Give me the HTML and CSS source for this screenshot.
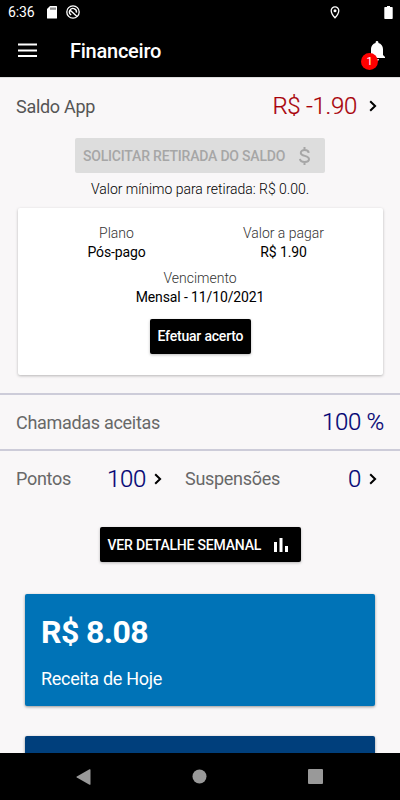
FILE: index.html
```html
<!DOCTYPE html>
<html lang="pt-BR">
<head>
<meta charset="utf-8">
<title>Financeiro</title>
<link rel="stylesheet" href="styles.css">
</head>
<body>
<div class="screen">
  <div class="statusbar">
    <span class="clock">6:36</span>
    <svg class="sd" width="10" height="13" viewBox="0 0 10 13"><path fill="#fff" d="M3 0h6.5q.5 0 .5.5v11.500q0 .5-.5.5h-9q-.5 0-.5-.5V3z"/><path stroke="#000" stroke-width=".9" d="M4 1.500v2.300M6 1.500v2.300M8 1.500v2.300"/></svg>
    <svg class="dnd" width="14" height="14" viewBox="0 0 14 14" fill="none" stroke="#fff"><circle cx="7" cy="7" r="6.200" stroke-width="1.300"/><path stroke-width="1.400" d="M5.200 10A3.500 3.500 0 1 1 10.400 7.600M4.500 5.500l6.500 6"/></svg>
    <svg class="pin" width="10" height="13" viewBox="0 0 10 13"><path fill="none" stroke="#fff" stroke-width="1.300" d="M5 .9A3.700 3.700 0 0 0 1.200 4.700C1.200 7.500 5 11.800 5 11.800S8.800 7.500 8.800 4.700A3.700 3.700 0 0 0 5 .9z"/><circle cx="5" cy="4.700" r="1.500" fill="#fff"/></svg>
    <svg class="battery" width="9" height="13" viewBox="0 0 9 13"><path fill="#fff" d="M3 0h3v1h2q.7 0 .7.700v10.600q0 .7-.7.7H1q-.7 0-.7-.7V1.700Q.3 1 1 1h2z"/></svg>
  </div>
  <header class="appbar">
    <svg width="19" height="15" viewBox="0 0 19 15"><path stroke="#fff" stroke-width="2" d="M0 1.500h19M0 7.500h19M0 13h19"/></svg>
    <h1>Financeiro</h1>
    <div class="bell">
      <svg width="16" height="20" viewBox="0 0 16 20"><path fill="#fff" d="M8 0c.8 0 1.400.6 1.400 1.300v.8C12.200 2.800 14 5.200 14 8v6l2 2v1H0v-1l2-2V8c0-2.800 1.800-5.200 4.600-5.900v-.8C6.600.6 7.200 0 8 0zM6 18h4a2 2 0 0 1-4 0z"/></svg>
      <span class="badge">1</span>
    </div>
  </header>
  <main>
    <section class="balance">
      <div class="row">
        <span class="label dark">Saldo App</span>
        <span class="value red">R$ -1.90</span>
        <svg class="chev" width="8" height="12" viewBox="0 0 8 12"><path d="M1.200 1.200l4.900 4.800-4.900 4.800"/></svg>
      </div>
      <button class="btn disabled" disabled><span>SOLICITAR RETIRADA DO SALDO</span><svg width="11" height="18" viewBox="0 0 11 18" fill="none" stroke="#a6a6a6" stroke-width="2"><path d="M5.500 0v3M5.500 15v3M9.700 5.800C9.500 3.900 7.900 3 5.700 3 3.500 3 1.800 4.100 1.800 5.900c0 4 8.200 2 8.200 6.200 0 2-1.800 2.900-4.300 2.900C3.200 15 1.200 14 1 11.900"/></svg></button>
      <p class="minimum">Valor mínimo para retirada: R$ 0.00.</p>
      <div class="card">
        <div class="plan">
          <div class="type"><p class="key">Plano</p><p class="val">Pós-pago</p></div>
          <div class="amount"><p class="key">Valor a pagar</p><p class="val">R$ 1.90</p></div>
        </div>
        <div class="due"><p class="key">Vencimento</p><p class="val">Mensal - 11/10/2021</p></div>
        <button class="btn settle">Efetuar acerto</button>
      </div>
    </section>
    <section class="row calls">
      <span class="label accepted">Chamadas aceitas</span>
      <span class="value blue">100 %</span>
    </section>
    <section class="stats">
      <div class="row points">
        <span class="label">Pontos</span><span class="value blue">100</span>
        <svg class="chev" width="8" height="12" viewBox="0 0 8 12"><path d="M1.200 1.200l4.900 4.800-4.900 4.800"/></svg>
      </div>
      <div class="row suspensions">
        <span class="label">Suspensões</span><span class="value blue">0</span>
        <svg class="chev" width="8" height="12" viewBox="0 0 8 12"><path d="M1.200 1.200l4.900 4.800-4.900 4.800"/></svg>
      </div>
    </section>
    <button class="btn weekly"><span>VER DETALHE SEMANAL</span><svg width="14" height="14" viewBox="0 0 14 14"><path fill="#fff" d="M0 4h3v10H0zM5.500 0h3v14h-3zM11 8h3v6h-3z"/></svg></button>
    <article class="income"><strong>R$ 8.08</strong><span>Receita de Hoje</span></article>
    <article class="income next"></article>
  </main>
  <nav>
    <svg width="15" height="16" viewBox="0 0 15 16"><path fill="#999" d="M13.500.3q1-.5 1 .7v14q0 1.200-1 .7L.8 8.600q-.8-.6 0-1.200z"/></svg>
    <svg width="15" height="15" viewBox="0 0 15 15"><circle cx="7.500" cy="7.500" r="7" fill="#999"/></svg>
    <svg width="15" height="15" viewBox="0 0 15 15"><rect width="15" height="15" rx="1" fill="#999"/></svg>
  </nav>
</div>
</body>
</html>
```
FILE: styles.css
```css
* { box-sizing: border-box; margin: 0; padding: 0; }
body { font-family: Roboto, sans-serif; background: #f9f7f8; color: #000; }
svg { display: block; flex: none; }
button { font: inherit; border: 0; }
.screen { width: 400px; height: 800px; display: flex; flex-direction: column; overflow: hidden; white-space: nowrap; }
.statusbar { height: 24px; flex: none; background: #000; color: #fff; display: flex; align-items: center; padding: 0 7px 0 8px; }
.clock { font-size: 14px; width: 39px; letter-spacing: -0.1px; }
.dnd { margin-left: 9px; }
.pin { margin-left: auto; }
.battery { margin-left: 44px; }
.appbar { height: 53px; flex: none; background: #000; color: #fff; display: flex; align-items: center; padding: 0 15px 0 18px; }
.appbar h1 { font-size: 20px; font-weight: 500; margin-left: 33px; line-height: 24px; letter-spacing: -0.25px; }
.bell { margin-left: auto; position: relative; }
.badge { position: absolute; left: -8px; top: 12px; width: 17px; height: 17px; border-radius: 50%; background: #f00; font-size: 11px; line-height: 17px; text-align: center; }
main { height: 676px; flex: none; overflow: hidden; display: flex; flex-direction: column; align-items: center; border-top: 1px solid #ddd; }
.row { display: flex; align-items: center; }
.balance { width: 400px; height: 315px; flex: none; display: flex; flex-direction: column; align-items: center; }
.balance .row { width: 100%; height: 56px; flex: none; padding: 0 23px 0 16px; }
.label { font-size: 18px; color: #686868; letter-spacing: -0.3px; }
.dark { color: #555; letter-spacing: -0.3px; }
.value { font-size: 24px; font-weight: 300; margin-left: auto; letter-spacing: -0.3px; -webkit-text-stroke: 0.2px currentColor; }
.red { color: #a80008; }
.blue { color: #000072; }
.chev { margin-left: 12px; fill: none; stroke: #000; stroke-width: 2; }
.stats .chev { margin-left: 8px; }
.btn { display: flex; align-items: center; background: #000; color: #fff; height: 35px; border-radius: 2px; font-weight: 500; font-size: 14px; letter-spacing: -0.2px; padding: 0 8px; flex: none; box-shadow: 0 1px 3px #0004; }
.disabled { width: 250px; margin-top: 4px; background: #ddd; color: #a6a6a6; box-shadow: none; }
.disabled svg { margin-left: 14px; }
.minimum { font-size: 14px; font-weight: 300; line-height: 16px; margin-top: 8px; color: #000; letter-spacing: -0.02px; }
.card { width: 365px; height: 167px; margin-top: 11px; background: #fff; border-radius: 2px; box-shadow: 0 1px 3px #0004; padding-top: 16px; display: flex; flex-direction: column; align-items: center; text-align: center; flex: none; font-size: 14px; line-height: 18.5px; }
.plan { display: grid; grid-template-columns: 167px 167px; }
.key { color: #333; font-weight: 300; }
.val { letter-spacing: -0.12px; }
.due { margin-top: 8px; }
.settle { margin-top: 13px; width: 101px; }
.calls { width: 100%; height: 58px; border-top: 2px solid #cdccd9; border-bottom: 2px solid #cdccd9; padding: 0 16px; flex: none; }
.stats { width: 100%; height: 55px; padding: 0 23px 0 16px; display: flex; flex: none; }
.points { width: 146px; }
.suspensions { width: 192px; margin-left: 23px; }
.weekly { width: 201px; margin-top: 21px; }
.weekly svg { margin-left: 13px; }
.income { width: 350px; height: 112px; margin-top: 32px; padding: 20px 16px; background: #0073b7; color: #fff; border-radius: 2px; box-shadow: 0 1px 3px #0006; display: flex; flex-direction: column; flex: none; }
.income strong { font-size: 32px; line-height: 36px; letter-spacing: -0.6px; }
.income span { font-size: 18px; line-height: 22px; margin-top: 18px; letter-spacing: -0.28px; }
.next { margin-top: 30px; background: #003f7c; }
nav { height: 47px; flex: none; background: #000; display: flex; justify-content: space-between; align-items: center; padding: 0 77px 0 76px; }
```
